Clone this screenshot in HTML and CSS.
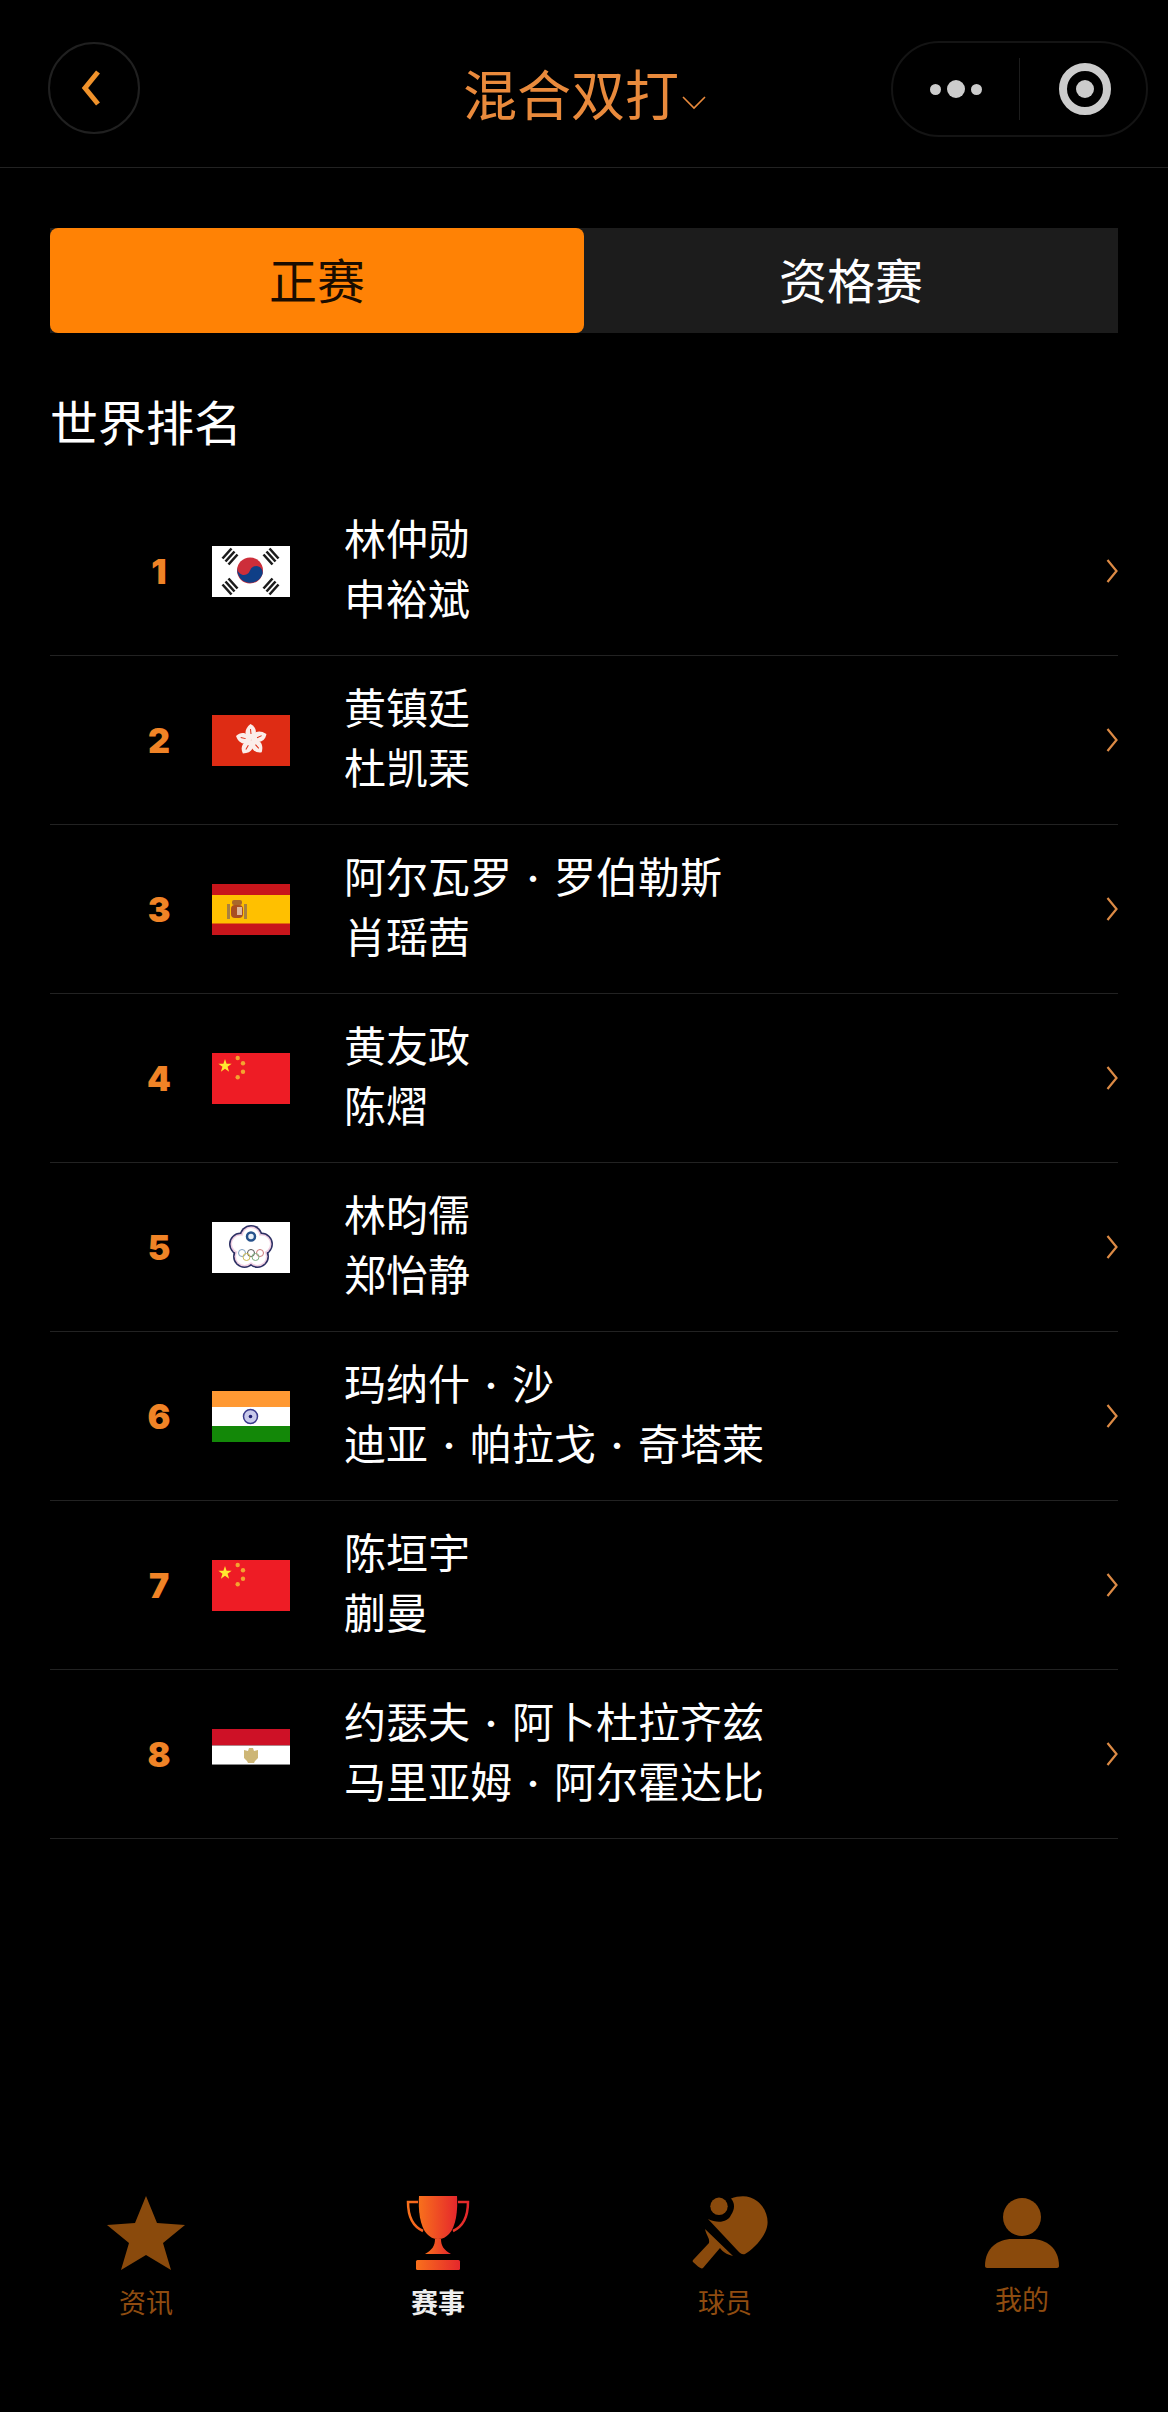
FILE: index.html
```html
<!DOCTYPE html>
<html lang="zh-CN">
<head>
  <meta charset="UTF-8" />
  <meta name="viewport" content="width=device-width, initial-scale=1.0"/>
  <title>混合双打</title>
  <link rel="stylesheet" href="styles.css">
</head>
<body>

  <svg class="defs" width="0" height="0">
    <defs>
      <symbol id="arrow" viewBox="0 0 12 24">
        <path d="M1.500 1l9 11-9 11" fill="none" stroke="#dc8a45" stroke-width="2.200"/>
      </symbol>
      <symbol id="flag-cn" viewBox="0 0 78 51">
        <rect width="78" height="51" fill="#ee1c25"/>
        <polygon points="13,6 14.590,10.820 19.660,10.840 15.570,13.830 17.110,18.660 13,15.700 8.890,18.660 10.430,13.830 6.340,10.840 11.410,10.820" fill="#ffe830"/>
        <circle cx="25.700" cy="5" r="2.200" fill="#f4a330"/>
        <circle cx="31" cy="10.300" r="2.200" fill="#f4a330"/>
        <circle cx="31" cy="18.700" r="2.200" fill="#f4a330"/>
        <circle cx="25.700" cy="24.300" r="2.200" fill="#f4a330"/>
      </symbol>
      <linearGradient id="cup" x1="0" y1="0" x2="1" y2="0">
        <stop offset="0" stop-color="#f8701c"/>
        <stop offset="1" stop-color="#e5272c"/>
      </linearGradient>
    </defs>
  </svg>

  <div class="topbar">
    <div class="back">
      <svg width="22" height="38" viewBox="0 0 22 38"><path d="M18 3L5 19l13 16" fill="none" stroke="#f0922b" stroke-width="5"/></svg>
    </div>
    <div class="title">混合双打<svg class="title-arrow" width="24" height="14" viewBox="0 0 24 14"><path d="M1 1l11 11L23 1" fill="none" stroke="#e98a3c" stroke-width="1.600"/></svg></div>
    <div class="capsule">
      <div class="dots">
        <span class="dot"></span><span class="dot dot-big"></span><span class="dot"></span>
      </div>
      <div class="capsule-line"></div>
      <div class="target"><span></span></div>
    </div>
  </div>

  <div class="tabs">
    <div class="tab active">正赛</div>
    <div class="tab">资格赛</div>
  </div>

  <h2 class="heading">世界排名</h2>

  <div class="list">

    <div class="row">
      <div class="rank">1</div>
      <svg class="flag" viewBox="0 0 78 51">
        <rect width="78" height="51" fill="#fff"/>
        <circle cx="38" cy="24.500" r="13" fill="#cd2e3a"/>
        <path d="M25.500 21A13 13 0 0 0 50.500 28A6.500 6.500 0 0 0 38 24.500A6.500 6.500 0 0 1 25.500 21z" fill="#0f3f87"/>
        <g stroke="#1c1c1c" stroke-width="2.600">
          <path d="M10.500 12.500l9-10M13.500 15.500l9-10M16.500 18.500l9-10"/>
          <path d="M66.500 12.500l-9-10M63.500 15.500l-9-10M60.500 18.500l-9-10"/>
          <path d="M10.500 38.500l9 10M13.500 35.500l9 10M16.500 32.500l9 10"/>
          <path d="M66.500 38.500l-9 10M63.500 35.500l-9 10M60.500 32.500l-9 10"/>
        </g>
      </svg>
      <div class="names"><div>林仲勋</div><div>申裕斌</div></div>
      <svg class="arrow"><use href="#arrow"/></svg>
    </div>

    <div class="row">
      <div class="rank">2</div>
      <svg class="flag" viewBox="0 0 78 51">
        <rect width="78" height="51" fill="#de2c14"/>
        <g id="hk-petal">
          <path d="M39.500 25c-7-3-8.500-10-1-16 7 3.500 7 11 1 16z" fill="#fbeeea"/>
          <path d="M38.500 14l.5 5" stroke="#de2c14" stroke-width="1"/>
        </g>
        <use href="#hk-petal" transform="rotate(72 39.500 25)"/>
        <use href="#hk-petal" transform="rotate(144 39.500 25)"/>
        <use href="#hk-petal" transform="rotate(216 39.500 25)"/>
        <use href="#hk-petal" transform="rotate(288 39.500 25)"/>
      </svg>
      <div class="names"><div>黄镇廷</div><div>杜凯琹</div></div>
      <svg class="arrow"><use href="#arrow"/></svg>
    </div>

    <div class="row">
      <div class="rank">3</div>
      <svg class="flag" viewBox="0 0 78 51">
        <rect width="78" height="51" fill="#c8151b"/>
        <rect y="11" width="78" height="28.500" fill="#ffc000"/>
        <rect x="15" y="20" width="3" height="15" fill="#a8803f"/>
        <rect x="32" y="20" width="3" height="15" fill="#a8803f"/>
        <rect x="19" y="21" width="12" height="13" rx="4" fill="#a94f22"/>
        <rect x="25" y="23" width="5" height="8" fill="#dcb79c"/>
        <rect x="20" y="16" width="10" height="5" rx="2" fill="#a9682a"/>
      </svg>
      <div class="names"><div>阿尔瓦罗<span class="sep">·</span>罗伯勒斯</div><div>肖瑶茜</div></div>
      <svg class="arrow"><use href="#arrow"/></svg>
    </div>

    <div class="row">
      <div class="rank">4</div>
      <svg class="flag"><use href="#flag-cn"/></svg>
      <div class="names"><div>黄友政</div><div>陈熠</div></div>
      <svg class="arrow"><use href="#arrow"/></svg>
    </div>

    <div class="row">
      <div class="rank">5</div>
      <svg class="flag" viewBox="0 0 78 51">
        <rect width="78" height="51" fill="#fff"/>
        <g fill="#2c2f63">
          <circle cx="39" cy="14.500" r="11.500"/>
          <circle cx="49.500" cy="22.100" r="11.500"/>
          <circle cx="45.500" cy="34.400" r="11.500"/>
          <circle cx="32.500" cy="34.400" r="11.500"/>
          <circle cx="28.500" cy="22.100" r="11.500"/>
        </g>
        <g fill="#f0cfe2">
          <circle cx="39" cy="14.500" r="10"/>
          <circle cx="49.500" cy="22.100" r="10"/>
          <circle cx="45.500" cy="34.400" r="10"/>
          <circle cx="32.500" cy="34.400" r="10"/>
          <circle cx="28.500" cy="22.100" r="10"/>
        </g>
        <g fill="#fff">
          <circle cx="39" cy="14.500" r="8.500"/>
          <circle cx="49.500" cy="22.100" r="8.500"/>
          <circle cx="45.500" cy="34.400" r="8.500"/>
          <circle cx="32.500" cy="34.400" r="8.500"/>
          <circle cx="28.500" cy="22.100" r="8.500"/>
          <circle cx="39" cy="26" r="10"/>
        </g>
        <circle cx="39" cy="14.500" r="4" fill="#e8f0f8" stroke="#26528c" stroke-width="2.500"/>
        <g fill="none" stroke-width="1">
          <circle cx="30" cy="31" r="3.500" stroke="#7fa0c0"/>
          <circle cx="39" cy="31" r="3.500" stroke="#555"/>
          <circle cx="48" cy="31" r="3.500" stroke="#c77"/>
          <circle cx="34.500" cy="35" r="3.500" stroke="#cdbb55"/>
          <circle cx="43.500" cy="35" r="3.500" stroke="#7fb07f"/>
        </g>
      </svg>
      <div class="names"><div>林昀儒</div><div>郑怡静</div></div>
      <svg class="arrow"><use href="#arrow"/></svg>
    </div>

    <div class="row">
      <div class="rank">6</div>
      <svg class="flag" viewBox="0 0 78 51">
        <rect width="78" height="16" fill="#ff9933"/>
        <rect y="16" width="78" height="19" fill="#fff"/>
        <rect y="35" width="78" height="16" fill="#138808"/>
        <circle cx="38.500" cy="25.500" r="7" fill="#c9c9ea" stroke="#3a3a8c" stroke-width="1.500"/>
        <circle cx="38.500" cy="25.500" r="1.800" fill="#1c1c70"/>
      </svg>
      <div class="names"><div>玛纳什<span class="sep">·</span>沙</div><div>迪亚<span class="sep">·</span>帕拉戈<span class="sep">·</span>奇塔莱</div></div>
      <svg class="arrow"><use href="#arrow"/></svg>
    </div>

    <div class="row">
      <div class="rank">7</div>
      <svg class="flag"><use href="#flag-cn"/></svg>
      <div class="names"><div>陈垣宇</div><div>蒯曼</div></div>
      <svg class="arrow"><use href="#arrow"/></svg>
    </div>

    <div class="row">
      <div class="rank">8</div>
      <svg class="flag" viewBox="0 0 78 51">
        <rect width="78" height="51" fill="#000"/>
        <rect width="78" height="16.500" fill="#ce1126"/>
        <rect y="16.500" width="78" height="18.500" fill="#fff"/>
        <rect y="35" width="78" height="1" fill="#888"/>
        <path d="M32 21l4 1 1-3h4l1 3 4-1v8l-3 3-1 2h-6l-1-2-3-3z" fill="#cdb676"/>
      </svg>
      <div class="names"><div>约瑟夫<span class="sep">·</span>阿卜杜拉齐兹</div><div>马里亚姆<span class="sep">·</span>阿尔霍达比</div></div>
      <svg class="arrow"><use href="#arrow"/></svg>
    </div>

  </div>

  <div class="tabbar">
    <div class="tabbar-item">
      <svg class="tabbar-icon" viewBox="0 0 80 76"><path d="M40 1l11 27 28 2-22 18 8 27-25-15-25 15 8-27L1 30l28-2z" fill="#8a4a0c"/></svg>
      <span>资讯</span>
    </div>
    <div class="tabbar-item on">
      <svg class="tabbar-icon" viewBox="0 0 80 76">
        <path d="M21 1h38c1 14-1 31-8 38-3 3-6 5-11 5s-8-2-11-5C22 32 20 15 21 1z" fill="url(#cup)"/>
        <path d="M20 7H10c0 12 4 24 15 29M60 7h10c0 12-4 24-15 29" fill="none" stroke="url(#cup)" stroke-width="2.500"/>
        <path d="M37 44h6c0 7 3 11 10 15H27c7-4 10-8 10-15z" fill="url(#cup)"/>
        <rect x="18" y="65" width="44" height="10" rx="1.500" fill="url(#cup)"/>
      </svg>
      <span>赛事</span>
    </div>
    <div class="tabbar-item player">
      <svg class="tabbar-icon" viewBox="0 0 80 76">
        <circle cx="29" cy="11.300" r="8.700" fill="#8a4a0c"/>
        <path d="M41 3.500C50 0 60 0 67 6c9 7 12 18 10 26-2 10-14 23-22 27-3 1-5-1-7-3L18 24c10 5 20 3 23-4 4-6 4-12 0-16.500z" fill="#8a4a0c"/>
        <path d="M15 34l28 27c-7-2-10-4-13-8L13 73c-1 1-3 0-5-1.500L3 67c-1-1 0-2 1-3l15-16c1-5-3-8-4-14z" fill="#8a4a0c"/>
      </svg>
      <span>球员</span>
    </div>
    <div class="tabbar-item mine">
      <svg class="tabbar-icon" viewBox="0 0 80 76">
        <circle cx="40" cy="22" r="19" fill="#8a4a0c"/>
        <path d="M3 71c0-18 13-27 27-27h20c14 0 27 9 27 27 0 1-1 2-2 2H5c-1 0-2-1-2-2z" fill="#8a4a0c"/>
      </svg>
      <span>我的</span>
    </div>
  </div>

</body>
</html>
```

FILE: styles.css
```css
body {
  margin: 0;
  width: 1168px;
  height: 2412px;
  background: #000;
  color: #fff;
  font-family: "Noto Sans CJK SC", "Noto Sans", sans-serif;
  display: flex;
  flex-direction: column;
}
.defs {
  display: block;
  height: 0;
}
.topbar {
  height: 167px;
  border-bottom: 1px solid #222;
  display: flex;
  align-items: flex-start;
  padding: 0 20px 0 48px;
  flex-shrink: 0;
}
.back {
  width: 92px;
  height: 92px;
  margin-top: 42px;
  box-sizing: border-box;
  border: 2px solid #202020;
  border-radius: 50%;
  display: flex;
  align-items: center;
  justify-content: center;
  padding-right: 6px;
}
.title {
  flex: 1;
  height: 78px;
  margin-top: 54px;
  padding-left: 138px;
  font-size: 54px;
  line-height: 78px;
  color: #e98a3c;
  text-align: center;
}
.title-arrow {
  margin-left: 3px;
  vertical-align: 6px;
}
.capsule {
  width: 257px;
  height: 96px;
  margin-top: 41px;
  box-sizing: border-box;
  border: 2px solid #141414;
  border-radius: 48px;
  display: flex;
  align-items: center;
}
.dots {
  width: 126px;
  display: flex;
  align-items: center;
  justify-content: center;
  gap: 6px;
}
.dot {
  width: 11px;
  height: 11px;
  border-radius: 50%;
  background: #ccc;
}
.dot-big {
  width: 18px;
  height: 18px;
}
.capsule-line {
  width: 1px;
  height: 62px;
  background: #1c1c1c;
}
.target {
  width: 52px;
  height: 52px;
  margin-left: 39px;
  box-sizing: border-box;
  border: 8px solid #ccc;
  border-radius: 50%;
  display: flex;
  align-items: center;
  justify-content: center;
}
.target span {
  width: 18px;
  height: 18px;
  border-radius: 50%;
  background: #ccc;
}
.tabs {
  display: flex;
  margin: 60px 50px 0;
  height: 105px;
  background: #1c1c1c;
  flex-shrink: 0;
}
.tab {
  flex: 1;
  font-size: 48px;
  line-height: 101px;
  text-align: center;
}
.tab.active {
  background: #ff8205;
  color: #1a0c00;
  border-radius: 8px;
}
.heading {
  margin: 52px 0 0 50px;
  font-size: 48px;
  line-height: 70px;
  font-weight: 400;
  flex-shrink: 0;
}
.list {
  margin: 32px 50px 0;
}
.row {
  height: 169px;
  box-sizing: border-box;
  border-bottom: 1px solid #222;
  display: flex;
  align-items: center;
}
.rank {
  width: 162px;
  padding-left: 56px;
  box-sizing: border-box;
  font-family: Inter, "Liberation Sans", sans-serif;
  font-weight: 900;
  font-size: 34px;
  text-align: center;
  color: #f08326;
}
.flag {
  width: 78px;
  height: 51px;
  flex-shrink: 0;
}
.names {
  flex: 1;
  margin-left: 54px;
  padding-bottom: 8px;
  font-size: 42px;
  line-height: 60px;
}
.sep {
  display: inline-block;
  width: 42px;
  font-size: 30px;
  line-height: 30px;
  text-align: center;
  vertical-align: 3px;
}
.arrow {
  width: 12px;
  height: 24px;
}
.tabbar {
  margin-top: auto;
  padding-bottom: 95px;
  display: grid;
  grid-template-columns: repeat(4, 292px);
}
.tabbar-item {
  display: flex;
  flex-direction: column;
  align-items: center;
  font-size: 27px;
  line-height: 30px;
  color: #8f4c10;
}
.tabbar-item span {
  margin-top: 16px;
}
.tabbar-item.on {
  color: #eee;
  font-weight: 700;
}
.tabbar-item.player {
  margin-right: 10px;
}
.tabbar-item.player .tabbar-icon {
  margin-left: 10px;
}
.tabbar-item.mine span {
  margin-top: 13px;
}
.tabbar-icon {
  width: 80px;
  height: 76px;
}
```
